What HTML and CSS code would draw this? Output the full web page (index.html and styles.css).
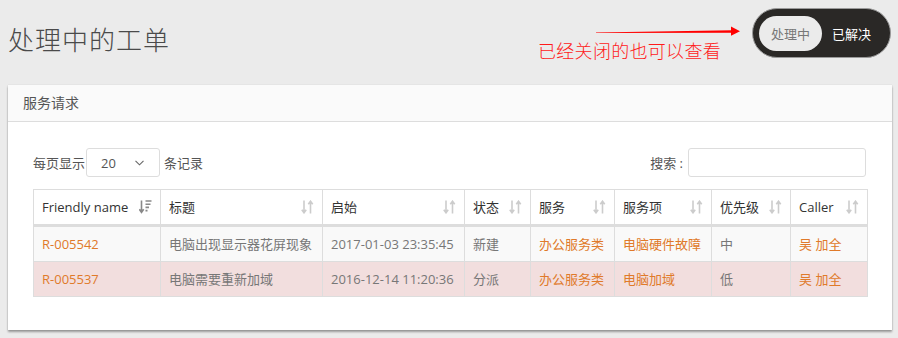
FILE: index.html
```html
<!DOCTYPE html>
<html lang="zh">
<head>
<meta charset="utf-8">
<title>处理中的工单</title>
<link rel="stylesheet" href="styles.css">
</head>
<body>
<header class="page-head">
  <h1 class="page-title">处理中的工单</h1>
  <div class="head-right">
    <div class="note">
      <svg class="note-arrow" width="145" height="12" viewBox="0 0 145 12">
        <polygon points="0,6.4 136,4.2 136,6.8 0,6.9" fill="#ff0000"/>
        <polygon points="135,0.5 144,5.2 135,9.8" fill="#ff0000"/>
      </svg>
      <div class="note-text">已经关闭的也可以查看</div>
    </div>
    <div class="toggle">
      <span class="toggle-opt active">处理中</span>
      <span class="toggle-opt">已解决</span>
    </div>
  </div>
</header>

<section class="card">
  <div class="card-head">服务请求</div>
  <div class="card-body">
    <div class="controls">
      <label class="length">每页显示
        <span class="select"><span>20</span>
          <svg width="9" height="6" viewBox="0 0 9 6"><polyline points="0.5,0.8 4.5,4.8 8.5,0.8" fill="none" stroke="#666" stroke-width="1.1"/></svg>
        </span>
        条记录</label>
      <label class="search">搜索 :<span class="input"></span></label>
    </div>
    <table class="grid">
      <colgroup>
        <col class="c1"><col class="c2"><col class="c3"><col class="c4"><col class="c5"><col class="c6"><col class="c7"><col class="c8">
      </colgroup>
      <thead>
        <tr>
          <th><div class="th"><span>Friendly name</span>
            <svg class="sort on" width="13" height="14" viewBox="0 0 13 14"><path d="M2.5 0.5v11.5M0.3 9.3l2.2 3 2.2-3" fill="none" stroke="#888" stroke-width="1.6"/><path d="M6.5 1h6M6.5 4.2h5M6.5 7.4h3.5M6.5 10.6h2" stroke="#888" stroke-width="1.6"/></svg></div></th>
          <th><div class="th"><span>标题</span><svg class="sort" width="13" height="14" viewBox="0 0 13 14"><path d="M3 0.5v12M0.8 9.8l2.2 3 2.2-3M9.5 13.5v-12M7.3 4.2l2.2-3 2.2 3" fill="none" stroke="#ccc" stroke-width="1.6"/></svg></div></th>
          <th><div class="th"><span>启始</span><svg class="sort" width="13" height="14" viewBox="0 0 13 14"><path d="M3 0.5v12M0.8 9.8l2.2 3 2.2-3M9.5 13.5v-12M7.3 4.2l2.2-3 2.2 3" fill="none" stroke="#ccc" stroke-width="1.6"/></svg></div></th>
          <th><div class="th"><span>状态</span><svg class="sort" width="13" height="14" viewBox="0 0 13 14"><path d="M3 0.5v12M0.8 9.8l2.2 3 2.2-3M9.5 13.5v-12M7.3 4.2l2.2-3 2.2 3" fill="none" stroke="#ccc" stroke-width="1.6"/></svg></div></th>
          <th><div class="th"><span>服务</span><svg class="sort" width="13" height="14" viewBox="0 0 13 14"><path d="M3 0.5v12M0.8 9.8l2.2 3 2.2-3M9.5 13.5v-12M7.3 4.2l2.2-3 2.2 3" fill="none" stroke="#ccc" stroke-width="1.6"/></svg></div></th>
          <th><div class="th"><span>服务项</span><svg class="sort" width="13" height="14" viewBox="0 0 13 14"><path d="M3 0.5v12M0.8 9.8l2.2 3 2.2-3M9.5 13.5v-12M7.3 4.2l2.2-3 2.2 3" fill="none" stroke="#ccc" stroke-width="1.6"/></svg></div></th>
          <th><div class="th"><span>优先级</span><svg class="sort" width="13" height="14" viewBox="0 0 13 14"><path d="M3 0.5v12M0.8 9.8l2.2 3 2.2-3M9.5 13.5v-12M7.3 4.2l2.2-3 2.2 3" fill="none" stroke="#ccc" stroke-width="1.6"/></svg></div></th>
          <th><div class="th"><span>Caller</span><svg class="sort" width="13" height="14" viewBox="0 0 13 14"><path d="M3 0.5v12M0.8 9.8l2.2 3 2.2-3M9.5 13.5v-12M7.3 4.2l2.2-3 2.2 3" fill="none" stroke="#ccc" stroke-width="1.6"/></svg></div></th>
        </tr>
      </thead>
      <tbody>
        <tr class="odd">
          <td class="link">R-005542</td>
          <td>电脑出现显示器花屏现象</td>
          <td>2017-01-03 23:35:45</td>
          <td>新建</td>
          <td class="link">办公服务类</td>
          <td class="link">电脑硬件故障</td>
          <td>中</td>
          <td class="link">吴 加全</td>
        </tr>
        <tr class="danger">
          <td class="link">R-005537</td>
          <td>电脑需要重新加域</td>
          <td>2016-12-14 11:20:36</td>
          <td>分派</td>
          <td class="link">办公服务类</td>
          <td class="link">电脑加域</td>
          <td>低</td>
          <td class="link">吴 加全</td>
        </tr>
      </tbody>
    </table>
  </div>
</section>
</body>
</html>
```

FILE: styles.css
```css
* { box-sizing: border-box; }
html, body { margin: 0; padding: 0; }
body {
  background: #ebebeb;
  font-family: "Open Sans", "Noto Sans CJK SC", sans-serif;
  font-size: 13px;
  color: #333;
  width: 898px;
  height: 338px;
  overflow: hidden;
}
.page-head {
  display: flex;
  justify-content: space-between;
  align-items: flex-start;
  height: 85px;
  padding: 8px 7px 0 8px;
}
.page-title {
  margin: 13px 0 0 0;
  font-family: "Noto Sans CJK SC", sans-serif;
  font-size: 26px;
  font-weight: 300;
  line-height: 36px;
  color: #4a4a4a;
  letter-spacing: 1px;
}
.head-right {
  display: flex;
  align-items: flex-start;
  gap: 11px;
}
.note {
  display: flex;
  flex-direction: column;
  padding-top: 18px;
}
.note-arrow {
  display: block;
  margin-left: 58px;
}
.note-text {
  font-family: "Noto Sans CJK SC", sans-serif;
  font-weight: 300;
  color: #ff1a1a;
  font-size: 18px;
  line-height: 22px;
  margin-top: 1px;
  letter-spacing: 0.3px;
}
.toggle {
  display: flex;
  align-items: center;
  width: 139px;
  height: 50px;
  background: #2a2826;
  border: 1.5px solid #9a9a9a;
  border-radius: 25px;
  padding: 0 6px;
  gap: 10px;
}
.toggle-opt {
  font-family: "Noto Sans CJK SC", sans-serif;
  font-size: 13px;
  color: #fff;
  line-height: 35px;
}
.toggle-opt.active {
  background: #ebebeb;
  color: #777;
  border-radius: 18px;
  width: 63px;
  text-align: center;
}
.card {
  margin: 0 6px 0 8px;
  background: #fff;
  height: 245px;
  box-shadow: 0 2px 2px rgba(0,0,0,0.35), 0 0 1px rgba(0,0,0,0.15);
}
.card-head {
  height: 37px;
  background: #fafafa;
  border-bottom: 1px solid #ddd;
  padding: 0 15px;
  line-height: 36px;
  font-size: 14px;
  color: #555;
}
.card-body {
  padding: 26px 26px 0 25px;
}
.controls {
  display: flex;
  justify-content: space-between;
  align-items: center;
  height: 29px;
  margin-bottom: 12px;
  color: #555;
}
.length, .search {
  display: flex;
  align-items: center;
}
.select {
  display: flex;
  align-items: center;
  justify-content: space-between;
  width: 74px;
  height: 29px;
  border: 1px solid #ddd;
  border-radius: 3px;
  padding: 0 15px 0 14px;
  margin: 0 4px 0 1px;
  color: #555;
  background: #fff;
}
.input {
  display: block;
  width: 178px;
  height: 29px;
  border: 1px solid #ddd;
  border-radius: 3px;
  margin-left: 5px;
}
.grid {
  width: 834px;
  table-layout: fixed;
  border-collapse: collapse;
  border: 1px solid #ddd;
}
.c1 { width: 127px; }
.c2 { width: 162px; }
.c3 { width: 142px; }
.c4 { width: 66px; }
.c5 { width: 84px; }
.c6 { width: 97px; }
.c7 { width: 79px; }
.c8 { width: 77px; }
.grid th, .grid td {
  border: 1px solid #ddd;
  padding: 7px 8px;
  line-height: 20px;
  text-align: left;
  white-space: nowrap;
  overflow: hidden;
}
.grid th {
  font-weight: normal;
  color: #333;
  border-bottom: 3px solid #ddd;
}
.th {
  display: flex;
  justify-content: space-between;
  align-items: center;
}
.sort { display: block; flex: none; }
.grid td { color: #777; }
.grid td.link { color: #e07a2a; }
.odd td { background: #f9f9f9; }
.danger td { background: #f2dede; }
```
